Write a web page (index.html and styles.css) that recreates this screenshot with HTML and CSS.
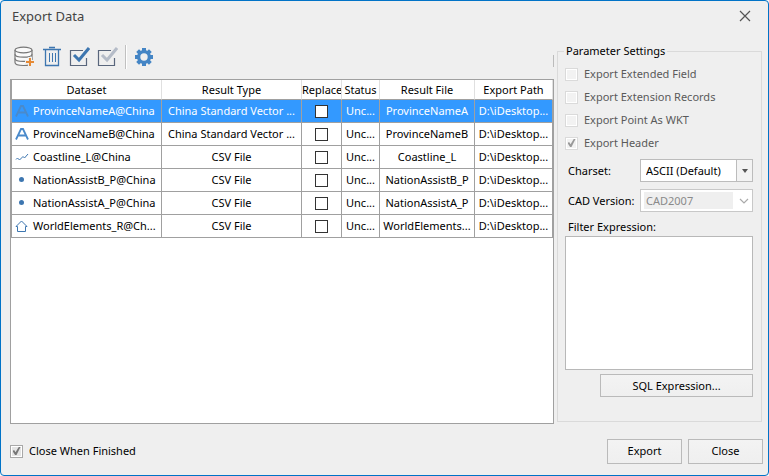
FILE: index.html
```html
<!DOCTYPE html>
<html lang="en">
<head>
<meta charset="utf-8">
<title>Export Data</title>
<link rel="stylesheet" href="styles.css">
</head>
<body>
<main class="dialog">
  <header class="titlebar">
    <h1>Export Data</h1>
    <button class="icon-button" type="button" aria-label="Close window">
      <svg width="12" height="12" viewBox="0 0 12 12"><path d="M1 1l10 10M11 1L1 11" fill="none" stroke="#555" stroke-width="1.2"/></svg>
    </button>
  </header>

  <div class="content">
    <section class="datasets">
      <div class="toolbar">
        <div class="tools">
          <button class="icon-button" type="button" aria-label="Add dataset">
            <svg width="21" height="22" viewBox="0 0 21 22"><g fill="#fafafa" stroke="#777" stroke-width="1.2"><path d="M1 4v12.500c0 1.700 3.500 3 8.500 3s8.500-1.300 8.500-3V4"/><ellipse cx="9.500" cy="4" rx="8.500" ry="2.800"/><path d="M1 8.300c0 1.700 3.500 2.900 8.500 2.900S18 10 18 8.300M1 12.500c0 1.700 3.500 2.900 8.500 2.900S18 14.200 18 12.500" fill="none"/></g><path d="M16 11v10M11 16h9" stroke="#efefef" stroke-width="4"/><path d="M16 12v8M12 16h8" stroke="#e68a35" stroke-width="2"/></svg>
          </button>
          <button class="icon-button" type="button" aria-label="Delete">
            <svg width="20" height="22" viewBox="0 0 20 22"><path d="M1 3.500h18M7 1.500h6M3.500 4v15.500h13V4" fill="none" stroke="#3d76b0" stroke-width="1.300"/><path d="M7.500 7v9M10.500 7v9M13.500 7v9" stroke="#3d76b0"/></svg>
          </button>
          <button class="icon-button" type="button" aria-label="Select all">
            <svg width="21" height="22" viewBox="0 0 21 22"><path d="M14 4.500H1.500v15h16V12" fill="none" stroke="#59667c" stroke-width="1.200"/><path d="M5 9l5 5L20 2" fill="none" stroke="#3d76b0" stroke-width="3"/></svg>
          </button>
          <button class="icon-button" type="button" aria-label="Invert selection">
            <svg width="21" height="22" viewBox="0 0 21 22"><path d="M14 4.500H1.500v15h16V12" fill="none" stroke="#59667c" stroke-width="1.200"/><path d="M5 9l5 5L20 2" fill="none" stroke="#b5bcc8" stroke-width="3"/></svg>
          </button>
          <span class="separator"></span>
          <button class="icon-button" type="button" aria-label="Settings">
            <svg width="20" height="20" viewBox="-10 -10 20 20"><g fill="#4485c5"><path d="M-2 -9h4v18h-4z"/><path d="M-2 -9h4v18h-4z" transform="rotate(45)"/><path d="M-2 -9h4v18h-4z" transform="rotate(90)"/><path d="M-2 -9h4v18h-4z" transform="rotate(135)"/><circle r="7"/></g><circle r="3.700" fill="#efefef"/></svg>
          </button>
        </div>
        <span class="toolbar-end"></span>
      </div>

      <div class="table-panel">
        <table>
          <colgroup><col class="c-dataset"><col class="c-type"><col class="c-replace"><col class="c-status"><col class="c-file"><col class="c-path"></colgroup>
          <thead>
            <tr><th>Dataset</th><th>Result Type</th><th>Replace</th><th>Status</th><th>Result File</th><th>Export Path</th></tr>
          </thead>
          <tbody>
            <tr class="selected">
              <td><span class="dataset"><svg width="14" height="12" viewBox="0 0 14 12"><path d="M1 11.500L6 1h2l5 10.500M3.500 7.500h7" fill="none" stroke="#4a8acb" stroke-width="1.800"/></svg>ProvinceNameA@China</span></td>
              <td>China Standard Vector ...</td><td><input type="checkbox" aria-label="Replace ProvinceNameA"></td><td>Unc...</td><td>ProvinceNameA</td><td>D:\iDesktop...</td>
            </tr>
            <tr>
              <td><span class="dataset"><svg width="14" height="12" viewBox="0 0 14 12"><path d="M1 11.500L6 1h2l5 10.500M3.500 7.500h7" fill="none" stroke="#4a8acb" stroke-width="1.800"/></svg>ProvinceNameB@China</span></td>
              <td>China Standard Vector ...</td><td><input type="checkbox" aria-label="Replace ProvinceNameB"></td><td>Unc...</td><td>ProvinceNameB</td><td>D:\iDesktop...</td>
            </tr>
            <tr>
              <td><span class="dataset"><svg width="14" height="12" viewBox="0 0 14 12"><path d="M1 8.500l1.500-1.500 2 2L8 5.500l1.500 1.500L13 3" fill="none" stroke="#3d76b0"/></svg>Coastline_L@China</span></td>
              <td>CSV File</td><td><input type="checkbox" aria-label="Replace Coastline_L"></td><td>Unc...</td><td>Coastline_L</td><td>D:\iDesktop...</td>
            </tr>
            <tr>
              <td><span class="dataset"><svg width="14" height="12" viewBox="0 0 14 12"><circle cx="6.500" cy="5.500" r="2.500" fill="#3d76b0"/></svg>NationAssistB_P@China</span></td>
              <td>CSV File</td><td><input type="checkbox" aria-label="Replace NationAssistB_P"></td><td>Unc...</td><td>NationAssistB_P</td><td>D:\iDesktop...</td>
            </tr>
            <tr>
              <td><span class="dataset"><svg width="14" height="12" viewBox="0 0 14 12"><circle cx="6.500" cy="5.500" r="2.500" fill="#3d76b0"/></svg>NationAssistA_P@China</span></td>
              <td>CSV File</td><td><input type="checkbox" aria-label="Replace NationAssistA_P"></td><td>Unc...</td><td>NationAssistA_P</td><td>D:\iDesktop...</td>
            </tr>
            <tr>
              <td><span class="dataset"><svg width="14" height="12" viewBox="0 0 14 12"><path d="M2.500 11.500V6.500H1L6.500 1 12 6.500h-1.500v5z" fill="none" stroke="#3d76b0"/></svg>WorldElements_R@Ch...</span></td>
              <td>CSV File</td><td><input type="checkbox" aria-label="Replace WorldElements_R"></td><td>Unc...</td><td>WorldElements...</td><td>D:\iDesktop...</td>
            </tr>
          </tbody>
        </table>
      </div>
    </section>

    <fieldset class="settings">
      <legend>Parameter Settings</legend>
      <div class="options">
        <label class="check"><input type="checkbox" disabled>Export Extended Field</label>
        <label class="check"><input type="checkbox" disabled>Export Extension Records</label>
        <label class="check"><input type="checkbox" disabled>Export Point As WKT</label>
        <label class="check"><input type="checkbox" checked disabled>Export Header</label>
      </div>
      <div class="fields">
        <label for="charset">Charset:</label>
        <div class="combo">
          <select id="charset"><option>ASCII (Default)</option></select>
          <span class="arrow arrow-box"><svg width="6" height="4" viewBox="0 0 6 4"><path d="M0 0h6L3 4z" fill="#555"/></svg></span>
        </div>
        <label for="cad">CAD Version:</label>
        <div class="combo">
          <select id="cad" disabled><option>CAD2007</option></select>
          <span class="arrow"><svg width="10" height="6" viewBox="0 0 10 6"><path d="M1 1l4 4 4-4" fill="none" stroke="#aaa" stroke-width="1.200"/></svg></span>
        </div>
      </div>
      <label class="filter-label" for="filter">Filter Expression:</label>
      <textarea id="filter"></textarea>
      <button class="button sql" type="button">SQL Expression...</button>
    </fieldset>
  </div>

  <footer>
    <label class="check finish"><input type="checkbox" checked>Close When Finished</label>
    <div class="actions">
      <button class="button" type="button">Export</button>
      <button class="button" type="button">Close</button>
    </div>
  </footer>
</main>
</body>
</html>
```
FILE: styles.css
```css
* { box-sizing: border-box; }
body {
  margin: 0;
  background: #fafafa;
  color: #000;
  font: 11px/16px "Noto Sans", sans-serif;
}
button, select, textarea { font: inherit; color: inherit; }
svg { display: block; flex: none; }

.dialog {
  display: flex;
  flex-direction: column;
  min-height: 100vh;
  background: #efefef;
  border: 1px solid #0173c7;
  border-radius: 4px;
}
.titlebar {
  display: flex;
  justify-content: space-between;
  align-items: center;
  height: 28px;
  margin-bottom: 14px;
  padding: 2px 17px 0 11px;
}
h1 { margin: 0; font-size: 13px; font-weight: 400; color: #444; }
.icon-button { padding: 0; border: 0; background: none; }

.content { display: flex; flex: 1; gap: 3px; padding: 0 6px 0 9px; }
.datasets { display: flex; flex: 1; flex-direction: column; min-width: 0; }
.toolbar {
  display: flex;
  justify-content: space-between;
  height: 36px;
  padding-left: 4px;
}
.tools { display: flex; align-items: center; gap: 7px; height: 28px; }
.separator { width: 2px; height: 24px; background: #c0c0c0; border-right: 1px solid #fff; }
.toolbar-end { align-self: center; width: 1px; height: 12px; background: #bbb; }

.table-panel { flex: 1; border: 1px solid #a0a0a0; background: #fff; }
table { width: 100%; table-layout: fixed; border-collapse: separate; border-spacing: 0; }
.c-dataset { width: 151px; }
.c-type { width: 140px; }
.c-replace { width: 40px; }
.c-status { width: 38px; }
.c-file { width: 95px; }
th, td {
  padding: 0;
  border-right: 1px solid #a0a0a0;
  border-bottom: 1px solid #a0a0a0;
  text-align: center;
  white-space: nowrap;
  overflow: hidden;
}
th { height: 20px; font-weight: 400; border-right-color: #e0e0e0; }
td { height: 23px; }
th:first-child, td:first-child { border-left: 1px solid #a0a0a0; }
.selected td { background: #3399ff; color: #fff; }
.dataset { display: flex; align-items: center; gap: 4px; padding-left: 3px; }

input[type="checkbox"] {
  appearance: none;
  flex: none;
  display: grid;
  place-content: center;
  width: 13px;
  height: 13px;
  margin: 0;
  border: 1px solid #333;
  background: #fff;
}
td input[type="checkbox"] { margin: 0 auto; }
.check { display: flex; align-items: center; gap: 6px; }
.check input[type="checkbox"] { border-color: #a8a8a8; background: #e4e4e4; box-shadow: inset 0 0 0 1px #fff; }
.check input[type="checkbox"]:disabled { border-color: #dadada; background: #f2f2f2; }
.check input:checked::before {
  content: "";
  width: 8px;
  height: 8px;
  background: #777;
  clip-path: polygon(0 50%, 20% 38%, 38% 65%, 78% 0, 100% 0, 50% 100%, 32% 100%);
}
.check input:disabled:checked::before { background: #999; }

.settings {
  display: flex;
  flex-direction: column;
  width: 205px;
  margin: 0 0 2px;
  padding: 0 8px 24px 7px;
  border: 1px solid #dadada;
}
legend { padding: 0 2px; margin-left: -1px; }
.options { display: grid; gap: 7px; margin-top: 7px; color: #5a5a5a; }
.fields {
  display: grid;
  grid-template-columns: 72px 1fr;
  align-items: center;
  gap: 7px 0;
  margin: 8px 0 7px;
  padding-left: 3px;
}
.combo { position: relative; }
select {
  appearance: none;
  display: block;
  width: 100%;
  height: 23px;
  padding: 0 18px 0 5px;
  border: 1px solid #bcbcbc;
  border-radius: 0;
  background: #fff;
}
select:disabled {
  opacity: 1;
  color: #8a8a8a;
  border-color: #c8c8c8;
  background: linear-gradient(#efefef, #efefef) 3px 2px / 89px 17px no-repeat #fff;
}
.arrow {
  position: absolute;
  inset: 1px 1px 1px auto;
  display: grid;
  place-items: center;
  width: 16px;
  pointer-events: none;
}
.arrow-box { border-left: 1px solid #bcbcbc; background: #f3f3f3; }
.filter-label { padding-left: 3px; }
textarea {
  display: block;
  flex: 1;
  width: 100%;
  min-height: 80px;
  margin-top: 1px;
  padding: 4px;
  border: 1px solid #b8b8b8;
  border-radius: 0;
  background: #fff;
  resize: none;
}
.button {
  height: 25px;
  min-width: 75px;
  padding: 0 8px;
  border: 1px solid #bababa;
  border-radius: 0;
  background: linear-gradient(#f3f3f3, #efefef);
}
.sql { width: 153px; height: 23px; margin-top: 4px; align-self: flex-end; }

footer {
  display: flex;
  justify-content: space-between;
  align-items: center;
  height: 51px;
  padding: 3px 5px 0 9px;
}
.actions { display: flex; gap: 6px; }
```
